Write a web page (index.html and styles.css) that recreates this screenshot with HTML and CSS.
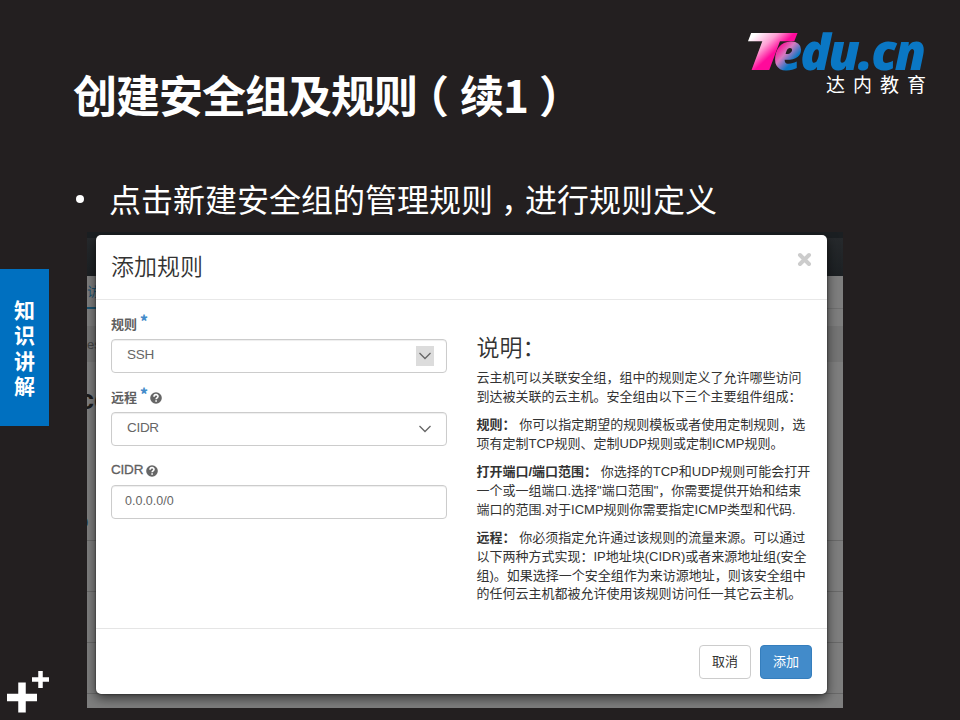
FILE: index.html
```html
<!DOCTYPE html>
<html lang="zh-CN">
<head>
<meta charset="utf-8">
<title>创建安全组及规则（续1）</title>
<link rel="stylesheet" href="styles.css">
</head>
<body>
<main class="slide">
  <header class="slide-head">
    <h1 class="title">创建安全组及规则<span class="open">（</span>续1<span class="close">）</span></h1>
    <div class="brand">
      <svg class="wordmark" width="184" height="46" viewBox="0 0 184 46">
        <defs>
          <linearGradient id="tfill" gradientUnits="userSpaceOnUse" x1="8" y1="4" x2="30" y2="28">
            <stop offset="0.1" stop-color="#ffffff"/>
            <stop offset="0.55" stop-color="#ffa0d5"/>
            <stop offset="0.9" stop-color="#ff0a9b"/>
          </linearGradient>
          <linearGradient id="efill" gradientUnits="userSpaceOnUse" x1="31" y1="23" x2="49" y2="39">
            <stop offset="0" stop-color="#f51c9b"/>
            <stop offset="0.35" stop-color="#d87ac0"/>
            <stop offset="0.8" stop-color="#0a77c4"/>
          </linearGradient>
        </defs>
        <text class="mark" y="43" x="-5" font-size="52" textLength="51" lengthAdjust="spacingAndGlyphs" fill="url(#tfill)">T</text>
        <text class="mark tight" y="43" x="27" font-size="50" textLength="151" lengthAdjust="spacingAndGlyphs" fill="url(#efill)">edu.cn</text>
      </svg>
      <div class="brand-cn">达内教育</div>
    </div>
  </header>
  <p class="bullet"><span class="dot"></span><span>点击新建安全组的管理规则<span class="comma">，</span>进行规则定义</span></p>

  <div class="content">
    <aside class="side">
      <div class="tab"><span>知</span><span>识</span><span>讲</span><span>解</span></div>
      <svg class="plus" width="44" height="44" viewBox="0 0 44 44">
        <path d="M0 27.5h30M15 12.5v30" stroke="#fff" stroke-width="7.5"/>
        <path d="M25 9.5h17M33.5 1v17" stroke="#fff" stroke-width="4.5"/>
      </svg>
    </aside>
    <section class="shot">
      <div class="page">
        <div class="page-nav"></div>
        <div class="page-tabs"><span>访</span></div>
        <div class="page-bar">es</div>
        <div class="page-title">cc</div>
        <div class="page-link">0</div>
        <div class="page-row"></div>
        <div class="page-row"></div>
        <div class="page-row"></div>
      </div>
      <div class="dialog">
        <div class="dialog-head">
          <h2>添加规则</h2>
          <svg class="x" width="15" height="15" viewBox="0 0 15 15"><path d="M3 3l9 9M12 3l-9 9" stroke="#ccc" stroke-width="4" stroke-linecap="round"/></svg>
        </div>
        <div class="dialog-body">
          <form class="form">
            <div class="field">
              <div class="label">规则<b class="star">*</b></div>
              <div class="input select">SSH<span class="arrow shaded"><svg width="18" height="20" viewBox="0 0 18 20"><path d="M3.5 7l5.5 5.5L14.5 7" fill="none" stroke="#666" stroke-width="1.3"/></svg></span></div>
            </div>
            <div class="field">
              <div class="label">远程<b class="star">*</b><svg class="help" width="12" height="12" viewBox="0 0 12 12"><circle cx="6" cy="6" r="5.8" fill="#666"/><path d="M4 4.7c0-2.7 4-2.7 4-.3 0 1.4-1.9 1.4-1.9 2.8M6.1 8.2v1.6" fill="none" stroke="#fff" stroke-width="1.6"/></svg></div>
              <div class="input select">CIDR<span class="arrow"><svg width="18" height="20" viewBox="0 0 18 20"><path d="M3.5 7l5.5 5.5L14.5 7" fill="none" stroke="#666" stroke-width="1.3"/></svg></span></div>
            </div>
            <div class="field">
              <div class="label"><span class="latin">CIDR</span><svg class="help" width="12" height="12" viewBox="0 0 12 12"><circle cx="6" cy="6" r="5.8" fill="#666"/><path d="M4 4.7c0-2.7 4-2.7 4-.3 0 1.4-1.9 1.4-1.9 2.8M6.1 8.2v1.6" fill="none" stroke="#fff" stroke-width="1.6"/></svg></div>
              <div class="input addr">0.0.0.0/0</div>
            </div>
          </form>
          <article class="info">
            <h3>说明：</h3>
            <p>云主机可以关联安全组，组中的规则定义了允许哪些访问<br>到达被关联的云主机。安全组由以下三个主要组件组成：</p>
            <p><b>规则：</b> 你可以指定期望的规则模板或者使用定制规则，选<br>项有定制TCP规则、定制UDP规则或定制ICMP规则。</p>
            <p><b>打开端口/端口范围：</b> 你选择的TCP和UDP规则可能会打开<br>一个或一组端口.选择"端口范围"，你需要提供开始和结束<br>端口的范围.对于ICMP规则你需要指定ICMP类型和代码.</p>
            <p><b>远程：</b> 你必须指定允许通过该规则的流量来源。可以通过<br>以下两种方式实现：IP地址块(CIDR)或者来源地址组(安全<br>组)。如果选择一个安全组作为来访源地址，则该安全组中<br>的任何云主机都被允许使用该规则访问任一其它云主机。</p>
          </article>
        </div>
        <div class="dialog-foot">
          <div class="btn">取消</div>
          <div class="btn primary">添加</div>
        </div>
      </div>
    </section>
  </div>
</main>
</body>
</html>
```
FILE: styles.css
```css
* { box-sizing: border-box; }
body { margin: 0; background: #231f20; font-family: "Liberation Sans", "Noto Sans CJK SC", sans-serif; }
h1, h2, h3, p { margin: 0; font-weight: 400; }
.slide { width: 960px; height: 720px; overflow: hidden; display: flex; flex-direction: column; color: #fff; }
.slide-head { height: 130px; flex: none; display: flex; justify-content: space-between; padding: 27px 32px 0 73px; }
.title { font: 700 44px/64px "Noto Sans CJK SC", sans-serif; letter-spacing: -1px; padding-top: 35px; white-space: nowrap; }
.open { margin-left: -12px; margin-right: 12px; }
.close { margin-left: 11px; }
.brand { width: 182px; display: flex; flex-direction: column; }
.wordmark { display: block; overflow: visible; }
.mark { font-family: "Noto Sans", "Open Sans", sans-serif; font-weight: 900; font-style: italic; }
.tight { letter-spacing: -2px; }
.brand-cn { font: 400 19px/24px "Noto Sans CJK SC", sans-serif; letter-spacing: 8px; margin-left: 80px; margin-top: -1px; white-space: nowrap; }
.bullet { height: 102px; flex: none; display: flex; align-items: center; padding: 34px 0 0 76px; font: 400 32px/48px "Noto Sans CJK SC", sans-serif; white-space: nowrap; }
.dot { width: 8px; height: 8px; border-radius: 50%; background: #fff; margin: 2px 25px 0 0; }
.comma { margin-left: 8px; margin-right: -8px; }
.content { display: flex; height: 488px; }
.side { width: 87px; padding-top: 37px; display: flex; flex-direction: column; }
.tab { width: 49px; height: 157px; background: #0070c0; display: flex; flex-direction: column; align-items: center; padding-top: 28px; font: 700 21px/25.4px "Noto Sans CJK SC", sans-serif; }
.plus { margin: 244px 0 0 7px; }

.shot { position: relative; width: 756px; height: 476px; overflow: hidden; padding: 3px 16px 0 9px; }
.page { position: absolute; inset: 0; background: #7e7e7e; display: flex; flex-direction: column; }
.page-nav { height: 44px; flex: none; background: linear-gradient(#1b1f22 0 6px, #26292c 6px, #1c2023); }
.page-tabs { height: 33px; flex: none; font-size: 13px; line-height: 32px; color: #1b5370; border-bottom: 1px solid #707070; }
.page-tabs span { display: block; width: 40px; height: 33px; border-bottom: 2px solid #1b5370; }
.page-bar { height: 36px; flex: none; margin-top: 17px; background: #757575; color: #444; font-size: 13px; line-height: 37px; }
.page-title { height: 60px; flex: none; margin-top: 8px; font-size: 27px; font-weight: 700; line-height: 60px; color: #1b1b1b; margin-left: -8px; }
.page-link { height: 111px; flex: none; border-bottom: 1px solid #696969; color: #1b4055; font-size: 13px; line-height: 185px; text-indent: -6px; }
.page-row { height: 51px; flex: none; border-bottom: 1px solid #696969; }

.dialog { position: relative; width: 731px; height: 459px; background: #fff; border-radius: 5px; box-shadow: 0 4px 12px rgba(0,0,0,.6), 0 0 2px #222; color: #333; display: flex; flex-direction: column; }
.dialog-head { height: 65px; flex: none; border-bottom: 1px solid #e8e8e8; display: flex; justify-content: space-between; padding: 14px 15px 0; }
.dialog-head h2 { font: 350 23px/34px "Noto Sans CJK SC", sans-serif; margin-top: -1px; }
.x { margin-top: 3px; }
.dialog-body { flex: 1; display: flex; padding: 15px 0 0 15px; }
.form { width: 336px; margin-right: 29.5px; }
.field { height: 72.8px; }
.label { height: 24px; display: flex; color: #606060; font: 700 13px/17px "Noto Sans CJK SC", sans-serif; }
.latin { font: 500 13.5px/18px "Liberation Sans", sans-serif; letter-spacing: -.2px; margin-right: 1px; -webkit-text-stroke: .3px #606060; }
.star { color: #428bca; font-size: 15px; line-height: 12px; margin-left: 3px; width: 8px; }
.help { margin: 4px 0 0 2px; }
.input { height: 34px; border: 1px solid #ccc; border-radius: 4px; box-shadow: inset 0 1px 1px rgba(0,0,0,.07); color: #666; font-size: 13.5px; line-height: 30px; padding: 0 13px; }
.select { padding: 0 12px 0 15px; display: flex; justify-content: space-between; letter-spacing: -.3px; }
.arrow { width: 18px; height: 20px; margin-top: 6px; }
.arrow svg { display: block; }
.shaded { background: #dcdcdc; }
.addr { font-size: 12.5px; }
.info { font-size: 13px; line-height: 18.8px; white-space: nowrap; }
.info h3 { font: 350 23px/34px "Noto Sans CJK SC", sans-serif; margin: 14px 0 6px; }
.info p { margin-bottom: 9.5px; }
.dialog-foot { height: 66px; flex: none; border-top: 1px solid #e5e5e5; display: flex; justify-content: flex-end; gap: 9px; padding: 16px 15px; }
.btn { width: 52px; height: 34px; border: 1px solid #ccc; border-radius: 4px; font-size: 13px; line-height: 31px; text-align: center; }
.primary { background: #428bca; border-color: #357ebd; color: #fff; }
```
